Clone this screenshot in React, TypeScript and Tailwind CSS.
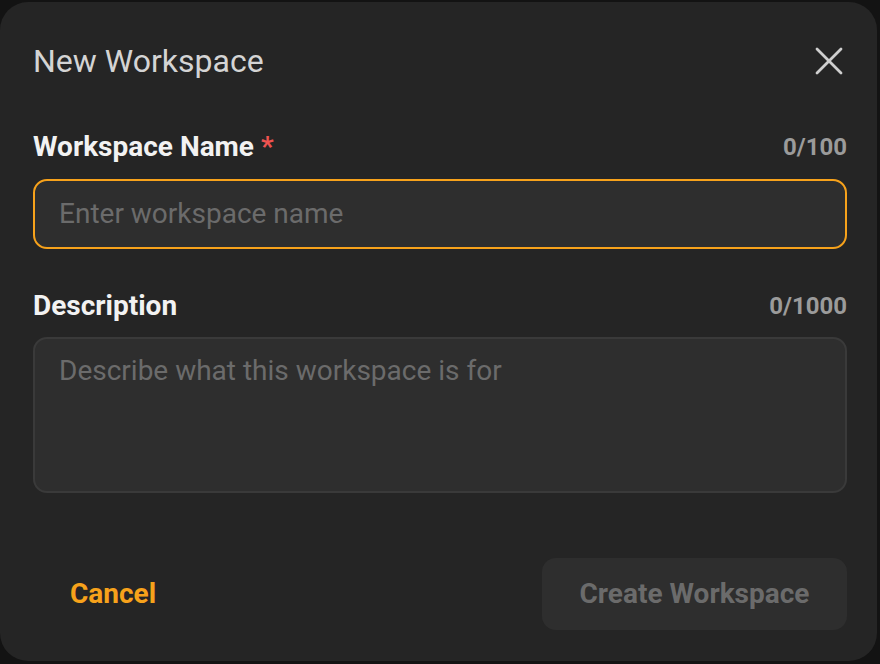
import { X } from 'lucide-react';

export default function App() {
  return (
    <div
      className="w-[880px] h-[664px] bg-[#131313] overflow-hidden"
      style={{ fontFamily: 'Roboto, "Noto Sans", sans-serif' }}
    >
      <div className="mt-[2px] w-[877px] h-[659px] rounded-[28px] bg-[#252525] pl-[33px] pr-[30px] pt-[40px] flex flex-col">
        {/* header */}
        <div className="flex items-center justify-between h-[38px]">
          <h2 className="text-[32px] leading-[38px] text-[#d4d4d4] font-normal">New Workspace</h2>
          <button className="w-[48px] h-[48px] flex items-center justify-center -mr-[6px] text-[#cfcfcf]">
            <X size={48} strokeWidth={1.4} />
          </button>
        </div>

        {/* name */}
        <div className="mt-[51px] flex items-center justify-between h-[32px]">
          <label className="text-[28px] leading-[32px] font-bold text-[#f2f2f2]">
            Workspace Name <span className="text-[#ef5350]">*</span>
          </label>
          <span className="text-[24px] font-bold text-[#9b9b9b]">0/100</span>
        </div>
        <div className="mt-[16px] h-[70px] rounded-[14px] border-2 border-[#f7a21b] bg-[#2e2e2e] flex items-center px-[24px]">
          <span className="text-[28px] text-[#6b6b6b]">Enter workspace name</span>
        </div>

        {/* description */}
        <div className="mt-[41px] flex items-center justify-between h-[32px]">
          <label className="text-[28px] leading-[32px] font-bold text-[#f2f2f2]">Description</label>
          <span className="text-[24px] font-bold text-[#9b9b9b]">0/1000</span>
        </div>
        <div className="mt-[15px] h-[156px] rounded-[14px] border-2 border-[#3a3a3a] bg-[#2e2e2e] px-[24px] pt-[14px]">
          <span className="text-[28px] leading-[36px] text-[#6b6b6b]">Describe what this workspace is for</span>
        </div>

        {/* footer */}
        <div className="mt-[65px] flex items-center justify-between">
          <button className="h-[72px] px-[37px] text-[28px] font-bold text-[#f7a21b]">Cancel</button>
          <button className="w-[305px] h-[72px] rounded-[14px] bg-[#2e2e2e] text-[28px] font-bold text-[#6b6b6b]">
            Create Workspace
          </button>
        </div>
      </div>
    </div>
  );
}
